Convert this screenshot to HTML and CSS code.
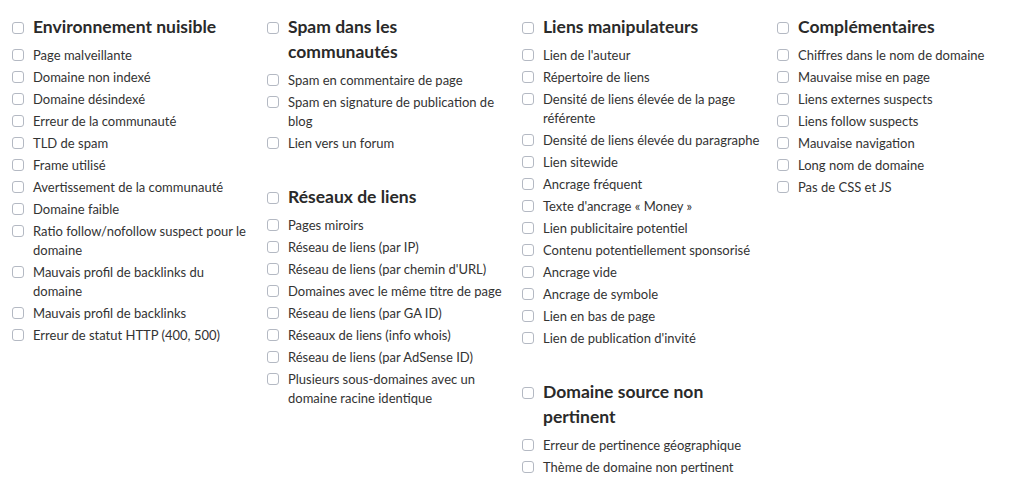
FILE: index.html
```html
<!DOCTYPE html>
<html lang="fr">
<head>
<meta charset="utf-8">
<link rel="stylesheet" href="styles.css">
</head>
<body>
<div class="filters">
  <div class="col">
    <section class="group">
      <label class="head"><span class="box"></span><span class="txt">Environnement nuisible</span></label>
      <ul class="items">
        <li><span class="box"></span><span class="txt">Page malveillante</span></li>
        <li><span class="box"></span><span class="txt">Domaine non indexé</span></li>
        <li><span class="box"></span><span class="txt">Domaine désindexé</span></li>
        <li><span class="box"></span><span class="txt">Erreur de la communauté</span></li>
        <li><span class="box"></span><span class="txt">TLD de spam</span></li>
        <li><span class="box"></span><span class="txt">Frame utilisé</span></li>
        <li><span class="box"></span><span class="txt">Avertissement de la communauté</span></li>
        <li><span class="box"></span><span class="txt">Domaine faible</span></li>
        <li><span class="box"></span><span class="txt">Ratio follow/nofollow suspect pour le domaine</span></li>
        <li><span class="box"></span><span class="txt">Mauvais profil de backlinks du domaine</span></li>
        <li><span class="box"></span><span class="txt">Mauvais profil de backlinks</span></li>
        <li><span class="box"></span><span class="txt">Erreur de statut HTTP (400, 500)</span></li>
      </ul>
    </section>
  </div>
  <div class="col">
    <section class="group">
      <label class="head"><span class="box"></span><span class="txt">Spam dans les communautés</span></label>
      <ul class="items">
        <li><span class="box"></span><span class="txt">Spam en commentaire de page</span></li>
        <li><span class="box"></span><span class="txt">Spam en signature de publication de blog</span></li>
        <li><span class="box"></span><span class="txt">Lien vers un forum</span></li>
      </ul>
    </section>
    <section class="group">
      <label class="head"><span class="box"></span><span class="txt">Réseaux de liens</span></label>
      <ul class="items">
        <li><span class="box"></span><span class="txt">Pages miroirs</span></li>
        <li><span class="box"></span><span class="txt">Réseau de liens (par IP)</span></li>
        <li><span class="box"></span><span class="txt">Réseau de liens (par chemin d'URL)</span></li>
        <li><span class="box"></span><span class="txt">Domaines avec le même titre de page</span></li>
        <li><span class="box"></span><span class="txt">Réseau de liens (par GA ID)</span></li>
        <li><span class="box"></span><span class="txt">Réseaux de liens (info whois)</span></li>
        <li><span class="box"></span><span class="txt">Réseau de liens (par AdSense ID)</span></li>
        <li><span class="box"></span><span class="txt">Plusieurs sous-domaines avec un domaine racine identique</span></li>
      </ul>
    </section>
  </div>
  <div class="col">
    <section class="group">
      <label class="head"><span class="box"></span><span class="txt">Liens manipulateurs</span></label>
      <ul class="items">
        <li><span class="box"></span><span class="txt">Lien de l'auteur</span></li>
        <li><span class="box"></span><span class="txt">Répertoire de liens</span></li>
        <li><span class="box"></span><span class="txt">Densité de liens élevée de la page référente</span></li>
        <li><span class="box"></span><span class="txt">Densité de liens élevée du paragraphe</span></li>
        <li><span class="box"></span><span class="txt">Lien sitewide</span></li>
        <li><span class="box"></span><span class="txt">Ancrage fréquent</span></li>
        <li><span class="box"></span><span class="txt">Texte d'ancrage « Money »</span></li>
        <li><span class="box"></span><span class="txt">Lien publicitaire potentiel</span></li>
        <li><span class="box"></span><span class="txt">Contenu potentiellement sponsorisé</span></li>
        <li><span class="box"></span><span class="txt">Ancrage vide</span></li>
        <li><span class="box"></span><span class="txt">Ancrage de symbole</span></li>
        <li><span class="box"></span><span class="txt">Lien en bas de page</span></li>
        <li><span class="box"></span><span class="txt">Lien de publication d'invité</span></li>
      </ul>
    </section>
    <section class="group">
      <label class="head"><span class="box"></span><span class="txt">Domaine source non pertinent</span></label>
      <ul class="items">
        <li><span class="box"></span><span class="txt">Erreur de pertinence géographique</span></li>
        <li><span class="box"></span><span class="txt">Thème de domaine non pertinent</span></li>
      </ul>
    </section>
  </div>
  <div class="col">
    <section class="group">
      <label class="head"><span class="box"></span><span class="txt">Complémentaires</span></label>
      <ul class="items">
        <li><span class="box"></span><span class="txt">Chiffres dans le nom de domaine</span></li>
        <li><span class="box"></span><span class="txt">Mauvaise mise en page</span></li>
        <li><span class="box"></span><span class="txt">Liens externes suspects</span></li>
        <li><span class="box"></span><span class="txt">Liens follow suspects</span></li>
        <li><span class="box"></span><span class="txt">Mauvaise navigation</span></li>
        <li><span class="box"></span><span class="txt">Long nom de domaine</span></li>
        <li><span class="box"></span><span class="txt">Pas de CSS et JS</span></li>
      </ul>
    </section>
  </div>
</div>
</body>
</html>
```
FILE: styles.css
```css
html, body {
  margin: 0;
  padding: 0;
  background: #ffffff;
}

body {
  font-family: "Lato", "Noto Sans", sans-serif;
  color: #333333;
}

.filters {
  display: grid;
  grid-template-columns: repeat(4, 255px);
  padding: 14px 0 0 12px;
}

.col {
  display: flex;
  flex-direction: column;
  gap: 31px;
  padding-right: 13px;
}

.group {
  display: flex;
  flex-direction: column;
  gap: 7px;
}

.head {
  display: flex;
  align-items: flex-start;
  gap: 9px;
  font-size: 17.5px;
  font-weight: 700;
  line-height: 25px;
  color: #2a2a2a;
}

.head .box {
  margin-top: 8px;
}

.items {
  list-style: none;
  margin: 0;
  padding: 0;
  display: flex;
  flex-direction: column;
  gap: 3px;
}

.items li {
  display: flex;
  align-items: flex-start;
  gap: 9px;
  font-size: 13px;
  line-height: 19px;
}

.items .box {
  margin-top: 3px;
}

.box {
  flex: none;
  width: 12px;
  height: 12px;
  box-sizing: border-box;
  border: 1px solid #b4b9c3;
  border-radius: 3px;
  background: #ffffff;
}

.txt {
  flex: 1;
  min-width: 0;
}
```
